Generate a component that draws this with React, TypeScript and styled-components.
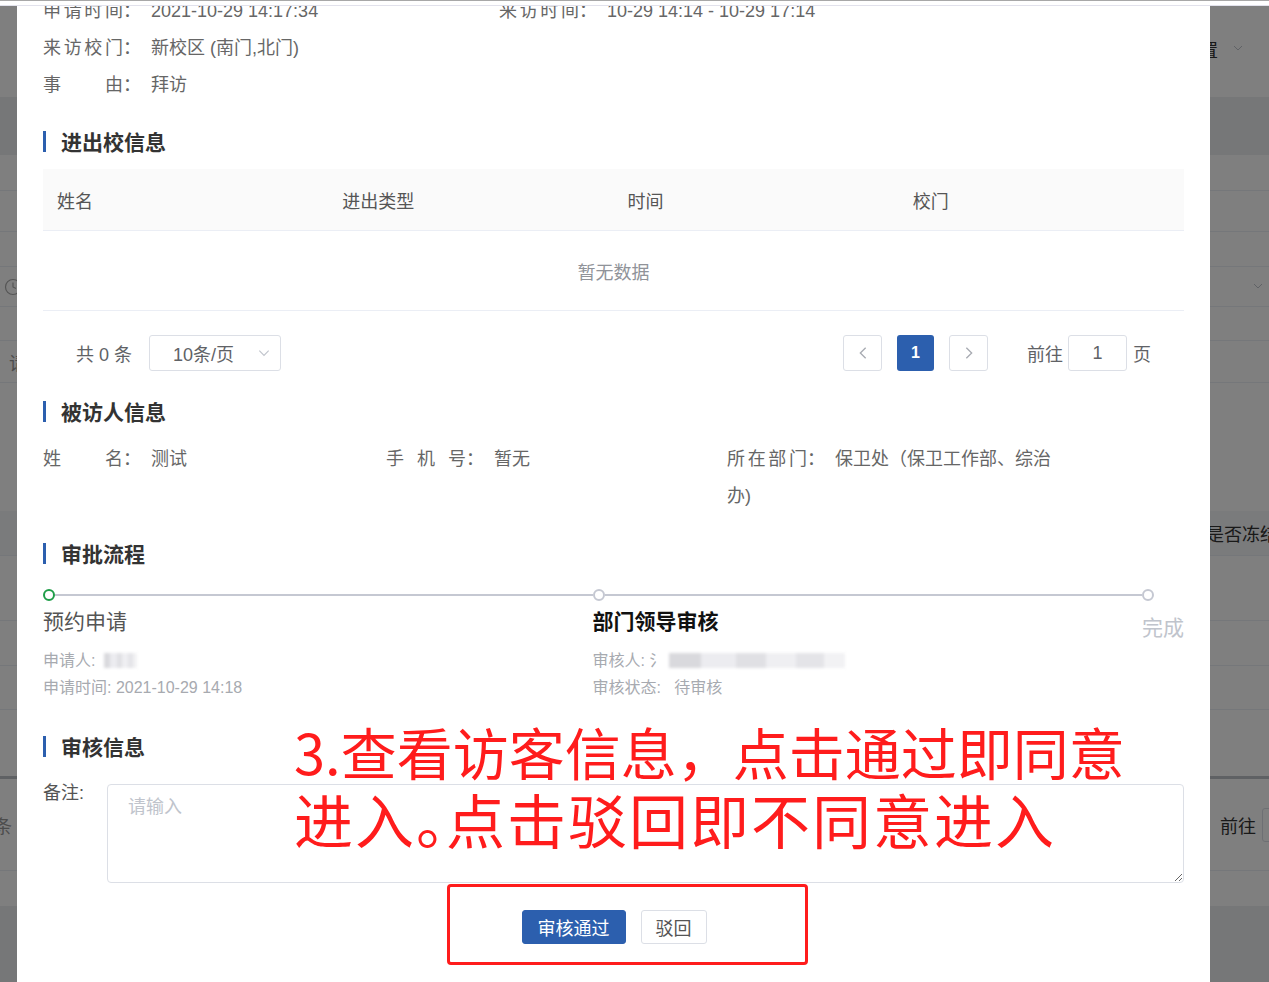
import React from 'react';
import styled, { createGlobalStyle } from 'styled-components';

const GlobalStyle = createGlobalStyle`
  html, body {
    margin: 0;
    padding: 0;
  }

  body {
    font-family: "Liberation Sans", "Noto Sans CJK SC", sans-serif;
    overflow: hidden;
  }
`;

const BLUE = '#2c5fae';
const RED = '#ff1c1c';

const Screen = styled.div`
  position: relative;
  width: 1269px;
  height: 982px;
  overflow: hidden;
  background: #fff;
`;

/* ---------- page behind the dialog ---------- */

const Page = styled.div`
  display: flex;
  flex-direction: column;
  width: 100%;
`;

const PageRow = styled.div<{ $h: number; $bg?: string; $line?: string; $thick?: number }>`
  display: flex;
  align-items: center;
  height: ${(p) => p.$h}px;
  box-sizing: border-box;
  background: ${(p) => p.$bg || '#fff'};
  border-bottom: ${(p) => (p.$line ? `${p.$thick || 1}px solid ${p.$line}` : 'none')};
  color: #333;
  font-size: 18px;
  white-space: nowrap;
`;

const PageLeft = styled.div`
  display: flex;
  align-items: center;
  width: 1210px;
  flex: none;
  padding-left: 4px;
  box-sizing: border-box;
  color: #999;
`;

const PageRight = styled.div`
  display: flex;
  align-items: center;
  flex: 1;
  overflow: hidden;
`;

const PageText = styled.span<{ $shift?: number }>`
  margin-left: ${(p) => p.$shift || 0}px;
  flex: none;
`;

const PageInput = styled.span`
  display: inline-block;
  width: 40px;
  height: 32px;
  margin-left: 6px;
  border: 1px solid #dcdfe6;
  border-radius: 3px;
  flex: none;
`;

const Mask = styled.div`
  position: absolute;
  inset: 0;
  background: rgba(0, 0, 0, 0.5);
`;

const TopEdge = styled.div`
  position: absolute;
  top: 0;
  left: 0;
  right: 0;
  height: 4px;
  background: #fff;
  border-top: 1px solid #a8a8a8;
  border-bottom: 1px solid #e2e2ec;
  z-index: 5;
`;

/* ---------- dialog ---------- */

const Dialog = styled.div`
  position: absolute;
  top: 0;
  bottom: 0;
  left: 17px;
  width: 1193px;
  background: #fff;
  overflow: hidden;
`;

const Body = styled.div`
  display: flex;
  flex-direction: column;
  margin-top: -7px;
  padding: 0 26px;
  color: #606266;
  font-size: 18px;
`;

const InfoGrid = styled.div<{ $cols: string; $top?: number }>`
  display: grid;
  grid-template-columns: ${(p) => p.$cols};
  margin-top: ${(p) => p.$top || 0}px;
  line-height: 37px;
`;

const InfoItem = styled.div`
  color: #666;
`;

const Label = styled.span`
  display: inline-block;
  width: 80px;
  text-align: justify;
  text-align-last: justify;
  vertical-align: top;
`;

const Colon = styled.span`
  margin-right: 10px;
`;

const SectionTitle = styled.h3<{ $gap: number }>`
  display: flex;
  align-items: center;
  gap: 15px;
  margin: ${(p) => p.$gap - 2}px 0 2px;
  height: 24px;
  font-size: 21px;
  font-weight: 700;
  color: #333;

  &::before {
    content: '';
    width: 3px;
    height: 21px;
    background: ${BLUE};
  }
`;

const Table = styled.div`
  margin-top: 14px;
`;

const HeadRow = styled.div`
  display: grid;
  grid-template-columns: repeat(4, 1fr);
  height: 62px;
  align-items: center;
  background: #fafafa;
  border-bottom: 1px solid #ebeef5;
  box-sizing: border-box;
  color: #555;
`;

const HeadCell = styled.div`
  padding-left: 14px;
`;

const Empty = styled.div`
  height: 80px;
  display: flex;
  align-items: center;
  justify-content: center;
  border-bottom: 1px solid #ebeef5;
  box-sizing: border-box;
  color: #909399;
`;

const Pager = styled.div`
  display: flex;
  align-items: center;
  height: 36px;
  margin-top: 24px;
  padding: 0 33px 0 33px;
  color: #606266;
`;

const Total = styled.span`
  margin-right: 17px;
`;

const SizeSelect = styled.div`
  display: flex;
  align-items: center;
  justify-content: space-between;
  width: 132px;
  height: 36px;
  padding: 0 9px 0 23px;
  box-sizing: border-box;
  border: 1px solid #dcdfe6;
  border-radius: 3px;
  color: #606266;
`;

const Grow = styled.div`
  flex: 1;
`;

const PageBtn = styled.div<{ $active?: boolean }>`
  display: flex;
  align-items: center;
  justify-content: center;
  width: ${(p) => (p.$active ? 37 : 39)}px;
  height: 36px;
  margin-left: 15px;
  box-sizing: border-box;
  border: ${(p) => (p.$active ? 'none' : '1px solid #dcdfe6')};
  border-radius: 3px;
  background: ${(p) => (p.$active ? BLUE : '#fff')};
  color: #fff;
  font-size: 16px;
  font-weight: 700;

  &:first-of-type {
    margin-left: 0;
  }
`;

const Jumper = styled.div`
  display: flex;
  align-items: center;
  margin-left: 39px;
  gap: 5px;
`;

const JumpInput = styled.div`
  display: flex;
  align-items: center;
  justify-content: center;
  width: 59px;
  height: 36px;
  box-sizing: border-box;
  border: 1px solid #dcdfe6;
  border-radius: 3px;
  margin-right: 1px;
  color: #606266;
`;

const Steps = styled.div`
  display: flex;
  margin-top: 22px;
`;

const Step = styled.div<{ $last?: boolean }>`
  flex: ${(p) => (p.$last ? 'none' : '1')};
  display: flex;
  flex-direction: column;
  align-items: ${(p) => (p.$last ? 'flex-end' : 'stretch')};
`;

const StepHead = styled.div`
  display: flex;
  align-items: center;
  align-self: stretch;
  height: 12px;
`;

const Dot = styled.span<{ $done?: boolean }>`
  width: 12px;
  height: 12px;
  box-sizing: border-box;
  border: 2px solid ${(p) => (p.$done ? '#1f9d48' : '#c5c8d2')};
  border-radius: 50%;
  background: #fff;
  flex: none;
`;

const StepLine = styled.span`
  flex: 1;
  height: 2px;
  background: #c5c8d2;
`;

const StepTitle = styled.div<{ $tone: 'done' | 'current' | 'wait' }>`
  margin-top: ${(p) => (p.$tone === 'wait' ? 12 : 6)}px;
  line-height: 30px;
  font-size: 21px;
  font-weight: ${(p) => (p.$tone === 'current' ? 700 : 400)};
  color: ${(p) => (p.$tone === 'current' ? '#111' : p.$tone === 'done' ? '#555' : '#c0c4cc')};
`;

const StepDesc = styled.div`
  margin-top: 10px;
  line-height: 27px;
  font-size: 16px;
  color: #a7aab0;
`;

const Blurred = styled.span<{ $w: number }>`
  display: inline-block;
  width: ${(p) => p.$w}px;
  height: 15px;
  margin-left: 4px;
  vertical-align: -2px;
  background: linear-gradient(90deg, #d9d9dd 0 18%, #ececf0 18% 38%, #e0e0e4 38% 55%, #efeff2 55% 72%, #e4e4e8 72% 88%, #f2f2f4 88%);
  filter: blur(1.5px);
`;

const RemarkRow = styled.div`
  display: flex;
  margin-top: 24px;
`;

const RemarkLabel = styled.label`
  width: 64px;
  flex: none;
  line-height: 18px;
  color: #555;
`;

const Remark = styled.textarea`
  flex: 1;
  height: 99px;
  box-sizing: border-box;
  padding: 7px 20px;
  border: 1px solid #dcdfe6;
  border-radius: 4px;
  font-family: inherit;
  font-size: 18px;
  color: #606266;
  outline: none;

  &::placeholder {
    color: #c0c4cc;
  }
`;

const Actions = styled.div`
  display: flex;
  justify-content: center;
  gap: 15px;
  margin-top: 27px;
  padding-left: 1px;
`;

const Button = styled.button<{ $primary?: boolean }>`
  height: 34px;
  padding: 0 ${(p) => (p.$primary ? 15 : 14)}px;
  border: 1px solid ${(p) => (p.$primary ? BLUE : '#dcdfe6')};
  border-radius: 3px;
  background: ${(p) => (p.$primary ? BLUE : '#fff')};
  color: ${(p) => (p.$primary ? '#fff' : '#555')};
  font-family: inherit;
  font-size: 18px;
`;

/* ---------- red guide notes drawn over the dialog ---------- */

const Note = styled.div`
  position: absolute;
  left: 277px;
  top: 717px;
  font-family: "Noto Sans CJK SC", sans-serif;
  color: ${RED};
  white-space: nowrap;
`;

const NoteLine = styled.div<{ $size: number; $spacing?: number }>`
  font-size: ${(p) => p.$size}px;
  letter-spacing: ${(p) => p.$spacing || 0}px;
  line-height: 68px;
`;

const NarrowStop = styled.span`
  letter-spacing: -29px;
`;

const NoteBox = styled.div`
  position: absolute;
  left: 430px;
  top: 884px;
  width: 361px;
  height: 81px;
  box-sizing: border-box;
  border: 3px solid ${RED};
  border-radius: 4px;
`;

function Chevron ({ dir, color = '#c0c4cc', size = 12 }: { dir: 'left' | 'right' | 'down'; color?: string; size?: number }) {
  const points = dir === 'left' ? '8,2 4,6 8,10' : dir === 'right' ? '4,2 8,6 4,10' : '2,4 6,8 10,4';

  return (
    <svg
      fill='none'
      height={size}
      viewBox='0 0 12 12'
      width={size}
    >
      <polyline
        points={points}
        stroke={color}
        strokeWidth='1'
      />
    </svg>
  );
}

function Clock () {
  return (
    <svg
      fill='none'
      height='18'
      viewBox='0 0 18 18'
      width='18'
    >
      <circle
        cx='9'
        cy='9'
        r='7.5'
        stroke='#aaa'
        strokeWidth='1.2'
      />
      <polyline
        points='9,4.5 9,9 12,10.5'
        stroke='#aaa'
        strokeWidth='1.2'
      />
    </svg>
  );
}

function BackPage () {
  return (
    <Page>
      <PageRow $h={97}>
        <PageLeft />
        <PageRight>
          <PageText $shift={-28}>位置</PageText>
          <PageText $shift={14}><Chevron dir='down' /></PageText>
        </PageRight>
      </PageRow>
      <PageRow
        $bg='#eceef1'
        $h={58}
      >
        <PageLeft />
        <PageRight />
      </PageRow>
      <PageRow
        $h={36}
        $line='#ebeef5'
      >
        <PageLeft />
        <PageRight />
      </PageRow>
      <PageRow
        $h={41}
        $line='#ebeef5'
      >
        <PageLeft />
        <PageRight />
      </PageRow>
      <PageRow
        $h={35}
        $line='#ebeef5'
      >
        <PageLeft />
        <PageRight />
      </PageRow>
      <PageRow
        $h={40}
        $line='#ebeef5'
      >
        <PageLeft><Clock /></PageLeft>
        <PageRight>
          <PageText $shift={42}><Chevron dir='down' /></PageText>
        </PageRight>
      </PageRow>
      <PageRow
        $h={34}
        $line='#ebeef5'
      >
        <PageLeft />
        <PageRight />
      </PageRow>
      <PageRow
        $h={42}
        $line='#ebeef5'
      >
        <PageLeft><PageText $shift={5}>请</PageText></PageLeft>
        <PageRight />
      </PageRow>
      <PageRow $h={128}>
        <PageLeft />
        <PageRight />
      </PageRow>
      <PageRow
        $bg='#f5f6f8'
        $h={45}
        $line='#ebeef5'
      >
        <PageLeft />
        <PageRight>
          <PageText $shift={-4}>是否冻结</PageText>
        </PageRight>
      </PageRow>
      <PageRow
        $h={65}
        $line='#ebeef5'
      >
        <PageLeft />
        <PageRight />
      </PageRow>
      <PageRow
        $h={45}
        $line='#ebeef5'
      >
        <PageLeft />
        <PageRight />
      </PageRow>
      <PageRow
        $h={44}
        $line='#ebeef5'
      >
        <PageLeft />
        <PageRight />
      </PageRow>
      <PageRow
        $h={69}
        $line='#bfc2c8'
        $thick={3}
      >
        <PageLeft />
        <PageRight />
      </PageRow>
      <PageRow
        $h={92}
        $line='#ebeef5'
      >
        <PageLeft><PageText $shift={-10}>条</PageText></PageLeft>
        <PageRight>
          <PageText $shift={10}>前往</PageText>
          <PageInput />
        </PageRight>
      </PageRow>
      <PageRow $h={35}>
        <PageLeft />
        <PageRight />
      </PageRow>
      <PageRow
        $bg='#eceef1'
        $h={80}
      >
        <PageLeft />
        <PageRight />
      </PageRow>
    </Page>
  );
}

export default function App () {
  return (
    <Screen>
      <GlobalStyle />
      <BackPage />
      <Mask />
      <Dialog>
        <Body>
          <InfoGrid $cols='456px 1fr'>
            <InfoItem><Label>申请时间</Label><Colon>：</Colon>2021-10-29 14:17:34</InfoItem>
            <InfoItem><Label>来访时间</Label><Colon>：</Colon>10-29 14:14 - 10-29 17:14</InfoItem>
            <InfoItem><Label>来访校门</Label><Colon>：</Colon>新校区 (南门,北门)</InfoItem>
            <InfoItem />
            <InfoItem><Label>事由</Label><Colon>：</Colon>拜访</InfoItem>
          </InfoGrid>

          <SectionTitle $gap={27}>进出校信息</SectionTitle>
          <Table>
            <HeadRow>
              <HeadCell>姓名</HeadCell>
              <HeadCell>进出类型</HeadCell>
              <HeadCell>时间</HeadCell>
              <HeadCell>校门</HeadCell>
            </HeadRow>
            <Empty>暂无数据</Empty>
          </Table>
          <Pager>
            <Total>共 0 条</Total>
            <SizeSelect>
              <span>10条/页</span>
              <Chevron
                dir='down'
                size={14}
              />
            </SizeSelect>
            <Grow />
            <PageBtn>
              <Chevron
                color='#a8abb2'
                dir='left'
                size={16}
              />
            </PageBtn>
            <PageBtn $active>1</PageBtn>
            <PageBtn>
              <Chevron
                color='#a8abb2'
                dir='right'
                size={16}
              />
            </PageBtn>
            <Jumper>
              <span>前往</span>
              <JumpInput>1</JumpInput>
              <span>页</span>
            </Jumper>
          </Pager>

          <SectionTitle $gap={30}>被访人信息</SectionTitle>
          <InfoGrid
            $cols='343px 341px 338px'
            $top={16}
          >
            <InfoItem><Label>姓名</Label><Colon>：</Colon>测试</InfoItem>
            <InfoItem><Label>手机号</Label><Colon>：</Colon>暂无</InfoItem>
            <InfoItem><Label>所在部门</Label><Colon>：</Colon>保卫处（保卫工作部、综治办)</InfoItem>
          </InfoGrid>

          <SectionTitle $gap={28}>审批流程</SectionTitle>
          <Steps>
            <Step>
              <StepHead><Dot $done /><StepLine /></StepHead>
              <StepTitle $tone='done'>预约申请</StepTitle>
              <StepDesc>
                <div>申请人: <Blurred $w={33} /></div>
                <div>申请时间: 2021-10-29 14:18</div>
              </StepDesc>
            </Step>
            <Step>
              <StepHead><Dot /><StepLine /></StepHead>
              <StepTitle $tone='current'>部门领导审核</StepTitle>
              <StepDesc>
                <div>审核人: 氵<Blurred $w={176} /></div>
                <div>审核状态:&nbsp;&nbsp; 待审核</div>
              </StepDesc>
            </Step>
            <Step $last>
              <StepHead><Dot /></StepHead>
              <StepTitle $tone='wait'>完成</StepTitle>
            </Step>
          </Steps>

          <SectionTitle $gap={35}>审核信息</SectionTitle>
          <RemarkRow>
            <RemarkLabel>备注:</RemarkLabel>
            <Remark placeholder='请输入' />
          </RemarkRow>
          <Actions>
            <Button $primary>审核通过</Button>
            <Button>驳回</Button>
          </Actions>
        </Body>

        <Note>
          <NoteLine $size={56}>3.查看访客信息，点击通过即同意</NoteLine>
          <NoteLine
            $size={59}
            $spacing={2}
          >
            进入<NarrowStop>。</NarrowStop>点击驳回即不同意进入
          </NoteLine>
        </Note>
        <NoteBox />
      </Dialog>
      <TopEdge />
    </Screen>
  );
}
